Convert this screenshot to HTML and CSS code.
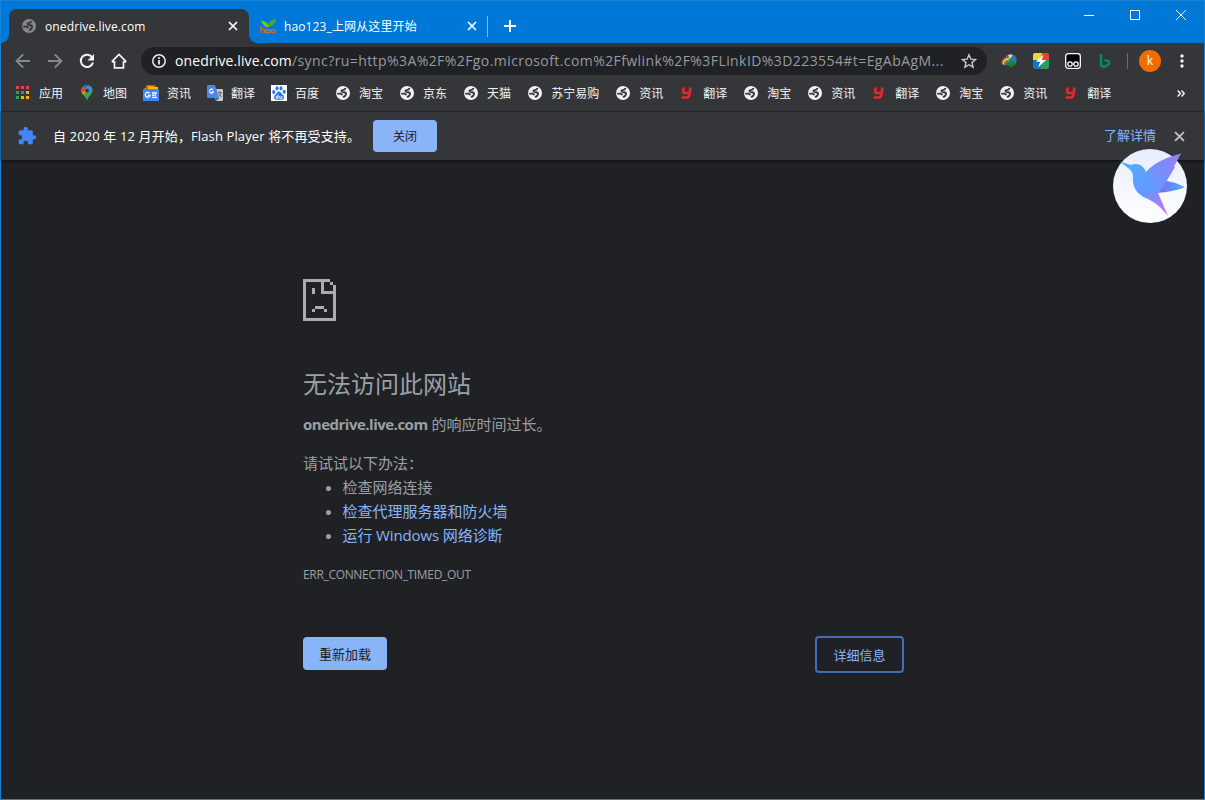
FILE: index.html
```
<!DOCTYPE html>
<html lang="zh-CN">
<head>
    <meta charset="UTF-8">
    <meta name="viewport" content="width=device-width, initial-scale=1.0">
    <title>onedrive.live.com</title>
    <link rel="stylesheet" href="styles.css">
</head>
<body>
    <svg class="defs">
        <symbol id="globe" viewBox="0 0 16 16">
            <circle cx="8" cy="8" r="7" fill="currentColor"/>
            <path class="land" d="M10.600 3Q10 4.700 8.300 4.900 6.300 5 6.500 6.200 6.900 7.300 9.200 7.200 11.400 7.500 11 9.300 10.500 11.300 8 12.200"/>
            <path class="land" d="M2.200 8.600H5Q6.600 8.700 7.200 10.200"/>
        </symbol>
        <symbol id="cross" viewBox="0 0 10 10">
            <path d="M1 1l8 8M9 1L1 9" fill="none" stroke="currentColor" stroke-width="1.700"/>
        </symbol>
        <symbol id="youdao" viewBox="0 0 16 16">
            <path d="M4.700 2.500L4.200 6.400Q4.100 8 6 8H11M11.500 2.500L10.400 10Q9.900 12.500 7.200 12.500H3" fill="none" stroke="#e8262d" stroke-width="2.700"/>
        </symbol>
    </svg>

    <div class="window">
        <div class="titlebar">
            <div class="tab active">
                <svg class="icon favicon"><use href="#globe"/></svg>
                <span class="tab-title">onedrive.live.com</span>
                <svg class="tab-close"><use href="#cross"/></svg>
            </div>
            <div class="tab">
                <svg class="icon" viewBox="0 0 16 16">
                    <path d="M1 2.500Q6 3 7.800 6.600 10 1.500 16 1 15 8 8.200 9.400 3 8.500 1 2.500z" fill="#43a636"/>
                    <path d="M1 2.500Q6 3 7.800 6.600L8.200 9.400Q3 8.500 1 2.500z" fill="#79c32a"/>
                    <path d="M1 8v7M1 12q3-2.600 3.400 0v3M9.600 11v4M9.600 13a2 1.700 0 1 0-4 0 2 1.700 0 1 0 4 0z" fill="none" stroke="#e2661d" stroke-width="1.300"/>
                    <ellipse cx="13.300" cy="13" rx="2" ry="1.700" fill="none" stroke="#e2661d" stroke-width="1.300"/>
                </svg>
                <span class="tab-title">hao123_上网从这里开始</span>
                <svg class="tab-close"><use href="#cross"/></svg>
            </div>
            <span class="tab-divider"></span>
            <svg class="new-tab" viewBox="0 0 12 12"><path d="M6 0v12M0 6h12" stroke="#fff" stroke-width="2"/></svg>
            <div class="window-controls">
                <svg viewBox="0 0 46 30"><path d="M18 15.500h10"/></svg>
                <svg viewBox="0 0 46 30"><path d="M18.500 10.500h9v9h-9z"/></svg>
                <svg viewBox="0 0 46 30"><path d="M18 10l10 10M28 10L18 20"/></svg>
            </div>
        </div>

        <div class="toolbar">
            <div class="nav">
                <svg class="icon dim" viewBox="0 0 16 16"><path d="M15 8H2M8.200 1.400L1.600 8l6.600 6.600"/></svg>
                <svg class="icon dim" viewBox="0 0 16 16"><path d="M1 8h13M7.800 1.400L14.400 8l-6.600 6.600"/></svg>
                <svg class="icon" viewBox="0 0 16 16"><path d="M13.300 4.600A6.200 6.200 0 1 0 14 9.500"/><path class="solid" d="M15 1v6.500H8.500z"/></svg>
                <svg class="icon home" viewBox="0 0 16 16"><path d="M3.500 8v6.800h9V8M.8 8.800H3.500M12.500 8.800h2.700M.8 8.700L8 1.500l7.200 7.200"/></svg>
            </div>
            <div class="omnibox">
                <svg class="icon" viewBox="0 0 16 16">
                    <circle cx="8" cy="8" r="6.200" fill="none" stroke="#e8eaed" stroke-width="1.500"/>
                    <path d="M8 7v4.500M8 4.300v1.800" stroke="#e8eaed" stroke-width="1.800"/>
                </svg>
                <span class="url"><b>onedrive.live.com</b>/sync?ru=http%3A%2F%2Fgo.microsoft.com%2Ffwlink%2F%3FLinkID%3D223554#t=EgAbAgM...</span>
                <svg class="icon star" viewBox="0 0 16 16"><path d="M8 1.800l1.900 4.300 4.700.4-3.600 3.100 1.100 4.600L8 11.700l-4.100 2.500L5 9.600 1.400 6.500l4.700-.4z" fill="none" stroke="#c8cacd" stroke-width="1.400"/></svg>
            </div>
            <div class="extensions">
                <svg class="icon" viewBox="0 0 16 16">
                    <circle cx="9.700" cy="7" r="6" fill="#2d78b8"/>
                    <path d="M7 2.200Q9 .8 11.500 1.800L10 5 7.500 6z" fill="#c9dda2"/>
                    <path d="M.9 10.500Q1.500 4.200 8 4.400" fill="none" stroke="#e63c2c" stroke-width="1.600"/>
                    <path d="M2.200 11.500Q2.500 6 8 5.900" fill="none" stroke="#f6df30" stroke-width="1.600"/>
                    <path d="M3.800 12.500Q4 8 8 7.500" fill="none" stroke="#2fae38" stroke-width="1.600"/>
                    <path d="M5.500 10.200H9V7.500l7 3.300-7 4v-2.500z" fill="#128a1c"/>
                </svg>
                <svg class="icon" viewBox="0 0 16 16">
                    <path d="M2 0h8L6 8H0V2Q0 0 2 0z" fill="#f9d42c"/>
                    <path d="M9 0h5q2 0 2 2v6H7z" fill="#e93d36"/>
                    <path d="M0 7h8v9H2q-2 0-2-2z" fill="#1872bd"/>
                    <path d="M8 7h8v7q0 2-2 2H8z" fill="#26a05a"/>
                    <path d="M10.500 1.500L3 8.700h4.200L5 14.500l8-7.600H8.800z" fill="#fff"/>
                </svg>
                <svg class="icon" viewBox="0 0 16 16">
                    <rect x=".7" y=".7" width="14.600" height="14.600" rx="2.500" fill="#000" stroke="#fff" stroke-width="1.300"/>
                    <circle cx="5" cy="11" r="2.200" fill="none" stroke="#fff" stroke-width="1.300"/>
                    <circle cx="11" cy="11" r="2.200" fill="none" stroke="#fff" stroke-width="1.300"/>
                </svg>
                <svg class="icon" viewBox="0 0 16 16"><path d="M4 1v11.500L7 14l5-3V8.500L7.500 7" fill="none" stroke="#08836f" stroke-width="2.600"/></svg>
            </div>
            <span class="toolbar-divider"></span>
            <span class="avatar">k</span>
            <svg class="icon menu" viewBox="0 0 16 16"><circle cx="8" cy="3" r="1.700"/><circle cx="8" cy="8" r="1.700"/><circle cx="8" cy="13" r="1.700"/></svg>
        </div>

        <div class="bookmarks">
            <span class="bookmark">
                <svg class="icon" viewBox="0 0 16 16">
                    <path d="M1 1h3v3H1zM6 1h3v3H6zM11 1h3v3h-3z" fill="#ee4037"/>
                    <path d="M1 6h3v3H1zM1 11h3v3H1z" fill="#27a05a"/>
                    <path d="M6 6h3v3H6z" fill="#1d86f5"/>
                    <path d="M11 6h3v3h-3zM6 11h3v3H6zM11 11h3v3h-3z" fill="#fab10a"/>
                </svg><span>应用</span></span>
            <span class="bookmark">
                <svg class="icon" viewBox="0 0 16 16">
                    <path d="M8 0a5.500 5.500 0 0 0-5.500 5.500C2.500 9.500 7 11 8 16c1-5 5.500-6.500 5.500-10.500A5.500 5.500 0 0 0 8 0z" fill="#34a853"/>
                    <path d="M2.600 4.500Q2 7 4 9.800L10 3 5 1z" fill="#fbbc04"/>
                    <path d="M3.800 2L7 5l-3 3.200Q1.200 5 3.800 2z" fill="#ea4335"/>
                    <path d="M3.800 2Q6-.7 9.800.3L6.500 4.300z" fill="#1a73e8"/>
                    <path d="M9.800.3Q12.500 1.200 13.300 4L9 8 8 4z" fill="#4285f4"/>
                    <circle cx="8" cy="5.500" r="2" fill="#35363a"/>
                </svg><span>地图</span></span>
            <span class="bookmark">
                <svg class="icon" viewBox="0 0 16 16">
                    <path d="M1 3l9-2.500 1 4H1z" fill="#2aa452"/><path d="M3 0h9v5H3z" fill="#e94436"/><path d="M5 1l10 1v4H5z" fill="#fbbc04"/>
                    <rect y="4" width="16" height="12" rx="1" fill="#4285f4"/>
                    <path d="M6.600 8.300A2.400 2.400 0 1 0 7 10.400H4.800M9 8h5M9 10.200h4M9 12.400h5" fill="none" stroke="#fff" stroke-width="1.300"/>
                </svg><span>资讯</span></span>
            <span class="bookmark">
                <svg class="icon" viewBox="0 0 16 16">
                    <path d="M6 4h9q1 0 1 1v10q0 1-1 1H9z" fill="#c5c8cc"/>
                    <path d="M1 0h7l4 13H1q-1 0-1-1V1q0-1 1-1z" fill="#4c86e8"/>
                    <path d="M9 13h3l-2.500 3z" fill="#2858b8"/>
                    <path d="M6 4.700A2 2 0 1 0 6.500 6.700H4.500" fill="none" stroke="#fff" stroke-width="1.100"/>
                    <path d="M10.500 7.500H15M12.700 6.500v1M14.200 7.500Q13.500 10.500 11.500 11.500M11.500 8.500Q13 11 15 12" fill="none" stroke="#65727c"/>
                </svg><span>翻译</span></span>
            <span class="bookmark">
                <svg class="icon" viewBox="0 0 16 16">
                    <path d="M0 0h16v16H0z" fill="#fff"/>
                    <g fill="#2a73e8"><ellipse cx="2.800" cy="7" rx="1.600" ry="2"/><ellipse cx="6" cy="3.300" rx="1.500" ry="2.100"/><ellipse cx="10" cy="3.300" rx="1.500" ry="2.100"/><ellipse cx="13.200" cy="6.800" rx="1.600" ry="2"/><path d="M8 6.500c1.700 0 2.200 2 3.800 3.200 1.700 1.300 1.700 4.900-1 5-1.600.1-4 .1-5.600 0-2.700-.1-2.700-3.700-1-5C5.800 8.500 6.300 6.500 8 6.500z"/></g>
                    <path d="M7 9.500v4H5.200v-2.200H7M8.800 11v2.400h2V11" fill="none" stroke="#fff" stroke-width=".9"/>
                </svg><span>百度</span></span>
            <span class="bookmark"><svg class="icon"><use href="#globe"/></svg><span>淘宝</span></span>
            <span class="bookmark"><svg class="icon"><use href="#globe"/></svg><span>京东</span></span>
            <span class="bookmark"><svg class="icon"><use href="#globe"/></svg><span>天猫</span></span>
            <span class="bookmark"><svg class="icon"><use href="#globe"/></svg><span>苏宁易购</span></span>
            <span class="bookmark"><svg class="icon"><use href="#globe"/></svg><span>资讯</span></span>
            <span class="bookmark"><svg class="icon"><use href="#youdao"/></svg><span>翻译</span></span>
            <span class="bookmark"><svg class="icon"><use href="#globe"/></svg><span>淘宝</span></span>
            <span class="bookmark"><svg class="icon"><use href="#globe"/></svg><span>资讯</span></span>
            <span class="bookmark"><svg class="icon"><use href="#youdao"/></svg><span>翻译</span></span>
            <span class="bookmark"><svg class="icon"><use href="#globe"/></svg><span>淘宝</span></span>
            <span class="bookmark"><svg class="icon"><use href="#globe"/></svg><span>资讯</span></span>
            <span class="bookmark"><svg class="icon"><use href="#youdao"/></svg><span>翻译</span></span>
            <svg class="overflow" viewBox="0 0 8 7"><path d="M.7.6l2.700 2.900L.7 6.400M4.500.6l2.700 2.900-2.700 2.900" fill="none" stroke="#f1f3f4" stroke-width="1.500"/></svg>
        </div>

        <div class="infobar">
            <svg class="puzzle" viewBox="0 0 24 24"><path fill="#4285f4" d="M20.500 11H19V7c0-1.100-.9-2-2-2h-4V3.500a2.500 2.500 0 0 0-5 0V5H4c-1.100 0-2 .9-2 2v3.800h1.500a2.700 2.700 0 0 1 0 5.400H2V20c0 1.100.9 2 2 2h3.800v-1.500a2.700 2.700 0 0 1 5.400 0V22H17c1.100 0 2-.9 2-2v-4h1.500a2.500 2.500 0 0 0 0-5z"/></svg>
            <span class="infobar-text">自 2020 年 12 月开始，Flash Player 将不再受支持。</span>
            <button class="dismiss">关闭</button>
            <a class="learn-more">了解详情</a>
            <svg class="infobar-close"><use href="#cross"/></svg>
        </div>

        <div class="page">
            <div class="error">
                <svg class="sad-file" viewBox="0 0 11 14" shape-rendering="crispEdges">
                    <path d="M0 0h9v1H7v3h3V2h1v12H0zM1 1v12h9V5H6V1zM9 1h1v1H9zM3 3h1v2H3zM4 9h3v1H4zM3 10h1v1H3zM7 10h1v1H7z" fill="#acacac" fill-rule="evenodd"/>
                </svg>
                <h1>无法访问此网站</h1>
                <p><strong>onedrive.live.com</strong> 的响应时间过长。</p>
                <p class="try">请试试以下办法：</p>
                <ul>
                    <li>检查网络连接</li>
                    <li><a>检查代理服务器和防火墙</a></li>
                    <li><a class="diagnose">运行 Windows 网络诊断</a></li>
                </ul>
                <div class="error-code">ERR_CONNECTION_TIMED_OUT</div>
                <div class="buttons">
                    <button class="reload">重新加载</button>
                    <button class="details">详细信息</button>
                </div>
            </div>
        </div>

        <svg class="bird" viewBox="0 0 74 74">
            <defs>
                <linearGradient id="disc" x1="0" y1="0" x2="0" y2="1"><stop offset="0" stop-color="#e7edff"/><stop offset="1" stop-color="#fff"/></linearGradient>
                <linearGradient id="body" gradientUnits="userSpaceOnUse" x1="15" y1="20" x2="58" y2="60"><stop offset="0" stop-color="#54aaff"/><stop offset=".5" stop-color="#6498ff"/><stop offset="1" stop-color="#d06bf5"/></linearGradient>
                <linearGradient id="wing" gradientUnits="userSpaceOnUse" x1="25" y1="35" x2="65" y2="8"><stop offset="0" stop-color="#54a5ff"/><stop offset="1" stop-color="#967cf8"/></linearGradient>
                <linearGradient id="tail"><stop offset="0" stop-color="#7867f5"/><stop offset="1" stop-color="#51b2ff"/></linearGradient>
            </defs>
            <circle cx="37" cy="37" r="37" fill="url(#disc)"/>
            <path d="M44 44L52 31.500Q62 33 72 38 64 42 44 44z" fill="url(#tail)"/>
            <path d="M7 12.500L18 16C25 13 31 17 33 23L51 32 45 44 55 67C46 56 41 53 35 50 22 45 19 36 20 27 20 21 13 18 7 12.500z" fill="url(#body)"/>
            <path d="M33 23Q43 11 68 4.500L61 17.500l1 .8-9 14.700Q50 39 45 44 33 40 27 27z" fill="url(#wing)"/>
        </svg>
    </div>
</body>
</html>
```

FILE: styles.css
```
* {
    box-sizing: border-box;
}
body {
    margin: 0;
    height: 100vh;
    background-color: #202124;
    font-family: "Open Sans", "Noto Sans CJK SC", sans-serif;
    overflow: hidden;
}
svg {
    display: block;
    flex-shrink: 0;
}
button {
    font-family: inherit;
    font-size: 13px;
    padding: 0;
    border-radius: 4px;
}
.defs {
    position: absolute;
    width: 0;
    height: 0;
}
.land {
    fill: none;
    stroke: #35363a;
    stroke-width: 1.9;
}
.icon {
    width: 16px;
    height: 16px;
}
.window {
    position: relative;
    display: flex;
    flex-direction: column;
    height: 800px;
    border: 1px solid #1883d7;
}

/* tabs */
.titlebar {
    display: flex;
    align-items: flex-start;
    height: 42px;
    padding-left: 8px;
    background-color: #0078d7;
    color: #fff;
}
.tab {
    display: flex;
    align-items: center;
    height: 34px;
    margin-top: 8px;
    width: 238px;
    padding: 0 10px 0 11px;
    font-size: 12px;
}
.tab.active {
    position: relative;
    width: 240px;
    padding: 0 11px 0 12px;
    background-color: #35363a;
    border-radius: 8px 8px 0 0;
}
.tab.active::before,
.tab.active::after {
    content: "";
    position: absolute;
    bottom: 0;
    width: 8px;
    height: 8px;
}
.tab.active::before {
    left: -8px;
    background: radial-gradient(circle at 0 0, transparent 7.5px, #35363a 8px);
}
.tab.active::after {
    right: -8px;
    background: radial-gradient(circle at 100% 0, transparent 7.5px, #35363a 8px);
}
.favicon {
    color: #85878a;
}
.tab-title {
    flex: 1;
    margin-left: 8px;
    padding-top: 2px;
    letter-spacing: 0.12px;
    line-height: 16px;
    white-space: nowrap;
}
.tab-close {
    width: 10px;
    height: 10px;
}
.tab-divider {
    width: 1px;
    height: 21px;
    margin-top: 15px;
    background-color: #80bbeb;
}
.new-tab {
    width: 12px;
    height: 12px;
    margin: 19px 0 0 16px;
}
.window-controls {
    display: flex;
    margin-left: auto;
}
.window-controls svg {
    width: 46px;
    height: 30px;
    margin-top: -1px;
    fill: none;
    stroke: #fff;
}

/* address row */
.toolbar {
    display: flex;
    align-items: center;
    height: 36px;
    padding-left: 14px;
    background-color: #35363a;
}
.nav {
    display: flex;
    gap: 16px;
    width: 126px;
}
.nav path {
    fill: none;
    stroke: #f1f3f4;
    stroke-width: 2;
}
.nav .dim path {
    stroke: #86888a;
}
.nav .home path {
    stroke-width: 1.7;
}
.nav .solid {
    fill: #f1f3f4;
    stroke: none;
}
.omnibox {
    display: flex;
    align-items: center;
    width: 846px;
    height: 28px;
    padding: 0 10px;
    border-radius: 14px;
    background-color: #202124;
}
.url {
    flex: 1;
    margin-left: 8px;
    font-size: 14px;
    line-height: 20px;
    letter-spacing: 0.42px;
    color: #969ba1;
    white-space: nowrap;
}
.url b {
    font-weight: normal;
    letter-spacing: 0.12px;
    color: #fff;
}
.extensions {
    display: flex;
    gap: 16px;
    margin-left: 14px;
}
.toolbar-divider {
    width: 1px;
    height: 16px;
    margin-left: 14px;
    background-color: #6c6d70;
}
.avatar {
    width: 22px;
    height: 22px;
    margin-left: 11px;
    border-radius: 50%;
    background-color: #ef6c00;
    color: #fff;
    font-size: 12px;
    line-height: 22px;
    text-align: center;
}
.menu {
    margin-left: 13px;
    fill: #f1f3f4;
}

/* bookmarks bar */
.bookmarks {
    display: flex;
    align-items: center;
    gap: 16px;
    height: 33px;
    padding: 0 19px 4px 14px;
    background-color: #35363a;
    border-bottom: 1px solid #28292c;
    color: #f1f3f4;
}
.bookmark {
    display: flex;
    gap: 8px;
    height: 16px;
    font-size: 12px;
    line-height: 18px;
    white-space: nowrap;
}
.bookmark .icon {
    margin-left: -0.5px;
    margin-right: 0.5px;
}
.overflow {
    width: 8px;
    height: 7px;
    margin-left: auto;
}

.infobar {
    display: flex;
    align-items: center;
    height: 48px;
    padding: 0 19px 0 16px;
    background-color: #35363a;
    box-shadow: 0 1px 3px rgba(0, 0, 0, 0.6);
    color: #fff;
    font-size: 13px;
    line-height: 20px;
    z-index: 1;
}
.puzzle {
    width: 20px;
    height: 20px;
}
.infobar-text {
    width: 320px;
    margin-left: 16px;
    padding-bottom: 1px;
    letter-spacing: 0.12px;
    white-space: nowrap;
}
.dismiss {
    width: 64px;
    height: 32px;
    border: none;
    background-color: #8ab4f8;
    color: #202124;
    font-size: 12px;
}
.learn-more {
    margin-left: auto;
    padding-bottom: 2px;
    color: #8ab4f8;
}
.infobar-close {
    width: 11px;
    height: 11px;
    margin-left: 18px;
    color: #bdc1c6;
}

/* network error page */
.page {
    flex: 1;
    padding: 119px 0 0 302px;
}
.error {
    width: 601px;
    color: #9aa0a6;
    font-size: 15px;
    line-height: 24px;
}
.error a {
    color: #8ab4f8;
}
.sad-file {
    width: 33px;
    height: 42px;
}
h1 {
    margin: 47px 0 12px;
    font-size: 24px;
    font-weight: normal;
    line-height: 32px;
}
p {
    margin: 0;
}
strong {
    letter-spacing: -0.5px;
}
.try {
    margin-top: 15px;
}
ul {
    margin: 0;
    padding-left: 39.5px;
}
.diagnose {
    letter-spacing: -0.12px;
}
.error-code {
    margin-top: 16px;
    font-size: 12px;
    letter-spacing: -0.33px;
}
.buttons {
    display: flex;
    justify-content: space-between;
    margin-top: 49px;
}
.reload {
    width: 84px;
    height: 33px;
    margin-top: 1px;
    border: none;
    background-color: #8ab4f8;
    color: #202124;
}
.details {
    width: 89px;
    height: 37px;
    border: 2px solid #426eb5;
    background: none;
    color: #8ab4f8;
}

.bird {
    position: absolute;
    top: 148px;
    left: 1112px;
    width: 74px;
    height: 74px;
    overflow: visible;
    z-index: 2;
}
```
